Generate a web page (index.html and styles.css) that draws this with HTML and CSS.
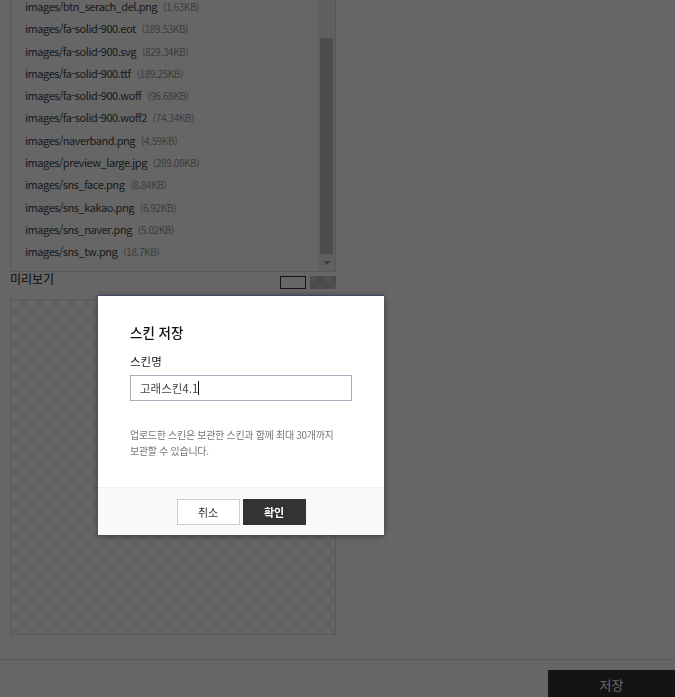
FILE: index.html
```html
<!DOCTYPE html>
<html lang="ko">
<head>
<meta charset="utf-8">
<title>스킨 저장</title>
<link rel="stylesheet" href="styles.css">
</head>
<body>
<div class="page">
  <div class="file-box">
    <ul class="file-list">
      <li><span class="name">images/btn_serach_del.png</span><span class="size">(1.63KB)</span></li>
      <li><span class="name">images/fa-solid-900.eot</span><span class="size">(189.53KB)</span></li>
      <li><span class="name">images/fa-solid-900.svg</span><span class="size">(829.34KB)</span></li>
      <li><span class="name">images/fa-solid-900.ttf</span><span class="size">(189.25KB)</span></li>
      <li><span class="name">images/fa-solid-900.woff</span><span class="size">(96.68KB)</span></li>
      <li><span class="name">images/fa-solid-900.woff2</span><span class="size">(74.34KB)</span></li>
      <li><span class="name">images/naverband.png</span><span class="size">(4.59KB)</span></li>
      <li><span class="name">images/preview_large.jpg</span><span class="size">(289.08KB)</span></li>
      <li><span class="name">images/sns_face.png</span><span class="size">(8.84KB)</span></li>
      <li><span class="name">images/sns_kakao.png</span><span class="size">(6.92KB)</span></li>
      <li><span class="name">images/sns_naver.png</span><span class="size">(5.02KB)</span></li>
      <li><span class="name">images/sns_tw.png</span><span class="size">(18.7KB)</span></li>
    </ul>
    <div class="scrollbar">
      <div class="thumb"></div>
      <div class="arrow"></div>
    </div>
  </div>

  <div class="preview-head">
    <span class="preview-title">미리보기</span>
    <div class="bg-toggle">
      <button class="bg-btn bg-white" type="button"></button>
      <button class="bg-btn bg-check" type="button"></button>
    </div>
  </div>
  <div class="preview-area"></div>

  <div class="page-footer">
    <button class="save-btn" type="button">저장</button>
  </div>
</div>

<div class="dim"></div>

<div class="modal">
  <div class="modal-body">
    <h2 class="modal-title">스킨 저장</h2>
    <label class="field-label" for="skinName">스킨명</label>
    <div class="input"><span class="input-text">고래스킨4.1</span><span class="caret"></span></div>
    <p class="desc">업로드한 스킨은 보관한 스킨과 함께 최대 30개까지<br>보관할 수 있습니다.</p>
  </div>
  <div class="modal-foot">
    <button class="btn btn-cancel" type="button">취소</button>
    <button class="btn btn-ok" type="button">확인</button>
  </div>
</div>
</body>
</html>
```

FILE: styles.css
```css
* { box-sizing: border-box; }
html, body { margin: 0; padding: 0; }
body {
  background: #fff;
  font-family: "Noto Sans CJK KR", "Noto Sans", sans-serif;
  color: #222;
  width: 675px;
  height: 697px;
  overflow: hidden;
}
.page {
  position: relative;
  height: 697px;
}
.file-box {
  margin-left: 10px;
  width: 326px;
  height: 272px;
  border: 1px solid #ddd;
  border-top: 0;
  display: flex;
  overflow: hidden;
}
.file-list {
  flex: 1;
  list-style: none;
  margin: -7px 0 0 0;
  padding: 0 0 0 14px;
}
.file-list li {
  height: 22.3px;
  line-height: 22.3px;
  white-space: nowrap;
}
.name {
  font-size: 11px;
  letter-spacing: -0.45px;
  color: #444;
}
.size {
  font-size: 10px;
  letter-spacing: -0.4px;
  color: #999;
  margin-left: 6px;
}
.scrollbar {
  width: 17px;
  background: #f1f1f1;
  display: flex;
  flex-direction: column;
  padding-top: 38px;
}
.thumb {
  height: 216px;
  margin: 0 2px;
  background: #c1c1c1;
}
.arrow {
  flex: 1;
  display: flex;
  align-items: center;
  justify-content: center;
}
.arrow::before {
  content: "";
  border-left: 4px solid transparent;
  border-right: 4px solid transparent;
  border-top: 4px solid #a3a3a3;
}
.preview-head {
  margin: 0 339px 0 10px;
  height: 27px;
  display: flex;
  align-items: center;
  justify-content: space-between;
}
.preview-title {
  font-size: 12px;
  color: #222;
  margin-top: -14px;
}
.bg-toggle {
  display: flex;
  gap: 4px;
  margin-top: -7px;
}
.bg-btn {
  width: 26px;
  height: 13px;
  padding: 0;
  border: 1px solid #333;
  background: #fff;
}
.bg-check {
  border: 0;
  background: repeating-conic-gradient(#b8b8b8 0 25%, #c8c8c8 0 50%) 0 0 / 14px 14px;
}
.preview-area {
  margin-left: 10px;
  width: 326px;
  height: 336px;
  border: 1px solid #e0e0e0;
  background: repeating-conic-gradient(#f3f3f3 0 25%, #fff 0 50%) 0 0 / 16px 16px;
}
.page-footer {
  margin-top: 24px;
  border-top: 1px solid #e4e4e4;
  padding-top: 10px;
  display: flex;
  justify-content: flex-end;
}
.save-btn {
  width: 127px;
  height: 40px;
  border: 0;
  background: #333;
  color: #fff;
  font-family: inherit;
  font-size: 13px;
  padding: 0 0 11px;
}
.dim {
  position: fixed;
  inset: 0;
  background: rgba(0, 0, 0, 0.6);
}
.modal {
  position: fixed;
  left: 98px;
  top: 295px;
  width: 286px;
  height: 240px;
  background: #fff;
  border-top: 1px solid #3e4b60;
  box-shadow: 0 1px 6px rgba(0, 0, 0, 0.45);
  display: flex;
  flex-direction: column;
}
.modal-body {
  flex: 1;
  padding: 27px 32px 0;
}
.modal-title {
  margin: 0;
  font-size: 13.5px;
  font-weight: 500;
  color: #111;
  line-height: 18px;
}
.field-label {
  display: block;
  margin-top: 12px;
  font-size: 11.5px;
  color: #222;
  line-height: 16px;
}
.input {
  margin-top: 6px;
  height: 26px;
  border: 1px solid #a7afbd;
  display: flex;
  align-items: center;
  padding-left: 9px;
}
.input-text {
  font-size: 11.5px;
  color: #444;
}
.caret {
  width: 1px;
  height: 14px;
  background: #111;
}
.desc {
  margin: 26px -10px 0 0;
  font-size: 10px;
  letter-spacing: -0.3px;
  line-height: 15.5px;
  color: #777;
  white-space: nowrap;
}
.modal-foot {
  height: 48px;
  background: #f8f9fb;
  border-top: 1px solid #eef0f3;
  display: flex;
  justify-content: center;
  align-items: flex-start;
  padding-top: 11px;
  gap: 3px;
}
.btn {
  width: 63px;
  height: 26px;
  font-family: inherit;
  font-size: 11px;
  padding: 0;
}
.btn-cancel {
  background: #fff;
  border: 1px solid #c9ced6;
  color: #333;
}
.btn-ok {
  background: #333;
  border: 1px solid #333;
  color: #fff;
  font-weight: 700;
}
```
